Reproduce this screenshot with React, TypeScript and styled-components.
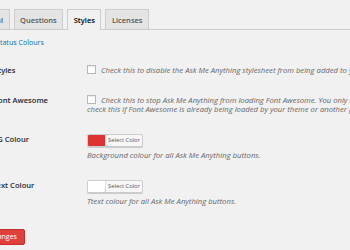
import { createGlobalStyle } from 'styled-components';
import styled from 'styled-components';

const GlobalStyle = createGlobalStyle`
  html, body {
    margin: 0;
    padding: 0;
    background: #f1f1f1;
  }
  body {
    font-family: 'Open Sans', 'DejaVu Sans', sans-serif;
    color: #444;
    overflow: hidden;
  }
`;

const Page = styled.div`
  width: 350px;
  height: 250px;
  overflow: hidden;
`;

// the screenshot is cropped on the left, so the whole form is shifted out
const Wrap = styled.div`
  margin-left: -42px;
  width: 600px;
`;

const TabBar = styled.div`
  display: flex;
  align-items: flex-end;
  gap: 4px;
  height: 30px;
  border-bottom: 1px solid #ccc;
  box-sizing: border-box;
  padding-left: 10px;
`;

const Tab = styled.div<{ $active?: boolean }>`
  box-sizing: border-box;
  padding: 0 5.5px;
  display: flex;
  align-items: center;
  font-size: 7.5px;
  font-weight: 600;
  color: ${(p) => (p.$active ? '#000' : '#555')};
  background: ${(p) => (p.$active ? '#f1f1f1' : '#e4e4e4')};
  border: 1px solid #ccc;
  border-bottom: none;
  margin-bottom: ${(p) => (p.$active ? '-1px' : '0')};
  height: ${(p) => (p.$active ? '21px' : '20px')};
`;

const SubLink = styled.a`
  display: block;
  margin: 7px 0 0 38px;
  font-size: 7.1px;
  color: #0073aa;
  text-decoration: none;
  line-height: 10px;
`;

const Table = styled.div`
  margin-top: 8px;
  display: grid;
  grid-template-columns: 129px 1fr;
`;

const Label = styled.div`
  padding: 10px 0 10px 7px;
  font-size: 7.6px;
  font-weight: 600;
  color: #23282d;
  line-height: 10px;
  white-space: nowrap;
`;

const Field = styled.div`
  padding: 10px 0;
  font-size: 7.7px;
  line-height: 9px;
`;

const CheckLine = styled.div`
  white-space: nowrap;
  line-height: 9px;
`;

const Box = styled.span`
  display: inline-block;
  width: 9px;
  height: 9px;
  box-sizing: border-box;
  border: 1px solid #b4b9be;
  background: #fff;
  vertical-align: -1px;
  margin-right: 5px;
  box-shadow: inset 0 1px 1px rgba(0, 0, 0, 0.08);
`;

const Desc = styled.span`
  font-style: italic;
  color: #666;
`;

const DescBlock = styled.div`
  margin-top: 4px;
  font-style: italic;
  color: #666;
  line-height: 9px;
  white-space: nowrap;
`;

const Picker = styled.div`
  display: flex;
  height: 13px;
  width: 56px;
  box-sizing: border-box;
  border: 1px solid #ccc;
  border-radius: 2px;
  background: #f7f7f7;
  box-shadow: 0 1px 0 #ccc;
  overflow: hidden;
`;

const Swatch = styled.span<{ $color: string }>`
  width: 17px;
  background: ${(p) => p.$color};
  border-right: 1px solid #ddd;
`;

const PickerText = styled.span`
  flex: 1;
  font-size: 5.8px;
  color: #555;
  display: flex;
  align-items: center;
  justify-content: center;
`;

const Save = styled.button`
  display: block;
  margin: 13px 0 0 6px;
  height: 16px;
  padding: 0 7px;
  border: 1px solid #c62d2d;
  border-radius: 2px;
  background: #e0403c;
  color: #fff;
  font-family: inherit;
  font-size: 7px;
  line-height: 14px;
`;

export default function App() {
  return (
    <Page>
      <GlobalStyle />
      <Wrap>
        <TabBar>
          <Tab>General</Tab>
          <Tab>Questions</Tab>
          <Tab $active>Styles</Tab>
          <Tab>Licenses</Tab>
        </TabBar>
        <SubLink href="#">Status Colours</SubLink>
        <Table>
          <Label>Disable Styles</Label>
          <Field>
            <CheckLine>
              <Box />
              <Desc>Check this to disable the Ask Me Anything stylesheet from being added to your site.</Desc>
            </CheckLine>
          </Field>
          <Label>Disable Font Awesome</Label>
          <Field>
            <CheckLine>
              <Box />
              <Desc>Check this to stop Ask Me Anything from loading Font Awesome. You only need to</Desc>
            </CheckLine>
            <CheckLine>
              <Desc>check this if Font Awesome is already being loaded by your theme or another plugin.</Desc>
            </CheckLine>
          </Field>
          <Label>Button BG Colour</Label>
          <Field>
            <Picker>
              <Swatch $color="#dd3333" />
              <PickerText>Select Color</PickerText>
            </Picker>
            <DescBlock>Background colour for all Ask Me Anything buttons.</DescBlock>
          </Field>
          <Label>Button Text Colour</Label>
          <Field>
            <Picker>
              <Swatch $color="#ffffff" />
              <PickerText>Select Color</PickerText>
            </Picker>
            <DescBlock>Ttext colour for all Ask Me Anything buttons.</DescBlock>
          </Field>
        </Table>
        <Save>Save Changes</Save>
      </Wrap>
    </Page>
  );
}
